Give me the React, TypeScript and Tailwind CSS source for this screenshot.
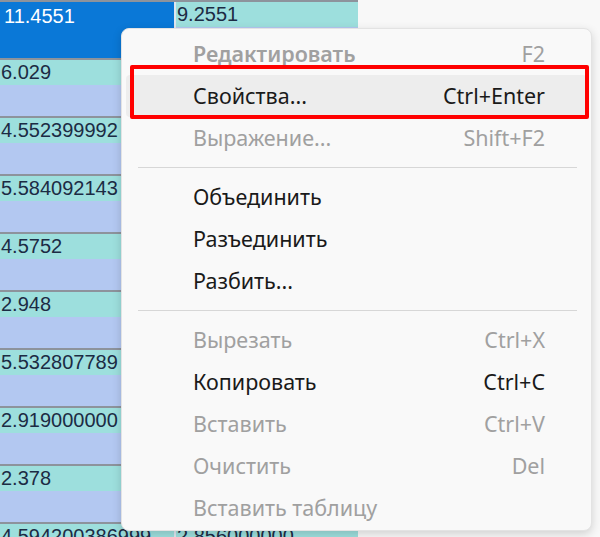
import React from 'react';

type Row = { a: string; b: string };

const rows: Row[] = [
  { a: '11.4551', b: '9.2551' },
  { a: '6.029', b: '4.129' },
  { a: '4.552399992', b: '3.1523999' },
  { a: '5.584092143', b: '4.0840921' },
  { a: '4.5752', b: '3.0752' },
  { a: '2.948', b: '1.948' },
  { a: '5.532807789', b: '4.0328077' },
  { a: '2.919000000', b: '1.9190000' },
  { a: '2.378', b: '1.378' },
  { a: '4.594200386999', b: '2.856000000' },
];

type Item =
  | { sep: true }
  | { sep?: false; label: string; shortcut?: string; disabled?: boolean; bold?: boolean; active?: boolean };

const items: Item[] = [
  { label: 'Редактировать', shortcut: 'F2', disabled: true, bold: true },
  { label: 'Свойства...', shortcut: 'Ctrl+Enter', active: true },
  { label: 'Выражение...', shortcut: 'Shift+F2', disabled: true },
  { sep: true },
  { label: 'Объединить' },
  { label: 'Разъединить' },
  { label: 'Разбить...' },
  { sep: true },
  { label: 'Вырезать', shortcut: 'Ctrl+X', disabled: true },
  { label: 'Копировать', shortcut: 'Ctrl+C' },
  { label: 'Вставить', shortcut: 'Ctrl+V', disabled: true },
  { label: 'Очистить', shortcut: 'Del', disabled: true },
  { label: 'Вставить таблицу', disabled: true },
];

const Cell: React.FC<{ text: string; selected?: boolean; width: string }> = ({ text, selected, width }) => {
  if (selected) {
    return (
      <div className={`${width} h-[56px] bg-[#0a78d7] text-white pl-[4px] pt-[2px] overflow-hidden whitespace-nowrap leading-[25px]`}>
        {text}
      </div>
    );
  }
  return (
    <div className={`${width} h-[56px] flex flex-col overflow-hidden`}>
      <div className="h-[25px] bg-[#9ddfdd] text-[#1c2b44] pl-[1px] whitespace-nowrap leading-[25px]">{text}</div>
      <div className="flex-1 bg-[#b3c8f1]" />
    </div>
  );
};

const ContextMenu: React.FC = () => (
  <div className="absolute left-[121px] top-[28px] w-[471px] h-[503px] rounded-[8px] bg-[#f9f9f9] border border-[#e3e3e3] shadow-[0_3px_10px_rgba(0,0,0,0.16)] pt-[4px] font-['Noto_Sans','Open_Sans',sans-serif] text-[21.5px]">
    {items.map((it, i) =>
      it.sep ? (
        <div key={i} className="h-[17px] flex items-center pl-[16px] pr-[14px]">
          <div className="h-px w-full bg-[#d7d7d7]" />
        </div>
      ) : (
        <div
          key={i}
          className={`mx-[4px] h-[42px] rounded-[4px] flex items-center justify-between pl-[67px] pr-[42px] ${
            it.active ? 'bg-[#ededed]' : ''
          } ${it.disabled ? 'text-[#a0a0a0]' : 'text-[#1a1a1a]'} ${it.bold ? 'font-semibold' : ''}`}
        >
          <span>{it.label}</span>
          {it.shortcut && <span className="font-normal">{it.shortcut}</span>}
        </div>
      )
    )}
    {/* annotation frame */}
    <div className="absolute left-[8px] top-[36px] w-[459px] h-[54px] border-[4px] border-[#ff0000] rounded-[2px] pointer-events-none" />
  </div>
);

export default function App() {
  return (
    <div className="relative w-[600px] h-[537px] overflow-hidden bg-[#f8f8f8]">
      <div className="w-[358px] border-t-2 border-[#8d939c] font-['Liberation_Sans',Arial,sans-serif] text-[20px]">
        {rows.map((r, i) => (
          <div key={i} className="flex border-b-2 border-[#8d939c]">
            <Cell text={r.a} selected={i === 0} width="w-[174px]" />
            <div className="w-[2px] bg-[#dfe6ef]" />
            <Cell text={r.b} width="w-[182px]" />
          </div>
        ))}
      </div>
      <ContextMenu />
    </div>
  );
}
